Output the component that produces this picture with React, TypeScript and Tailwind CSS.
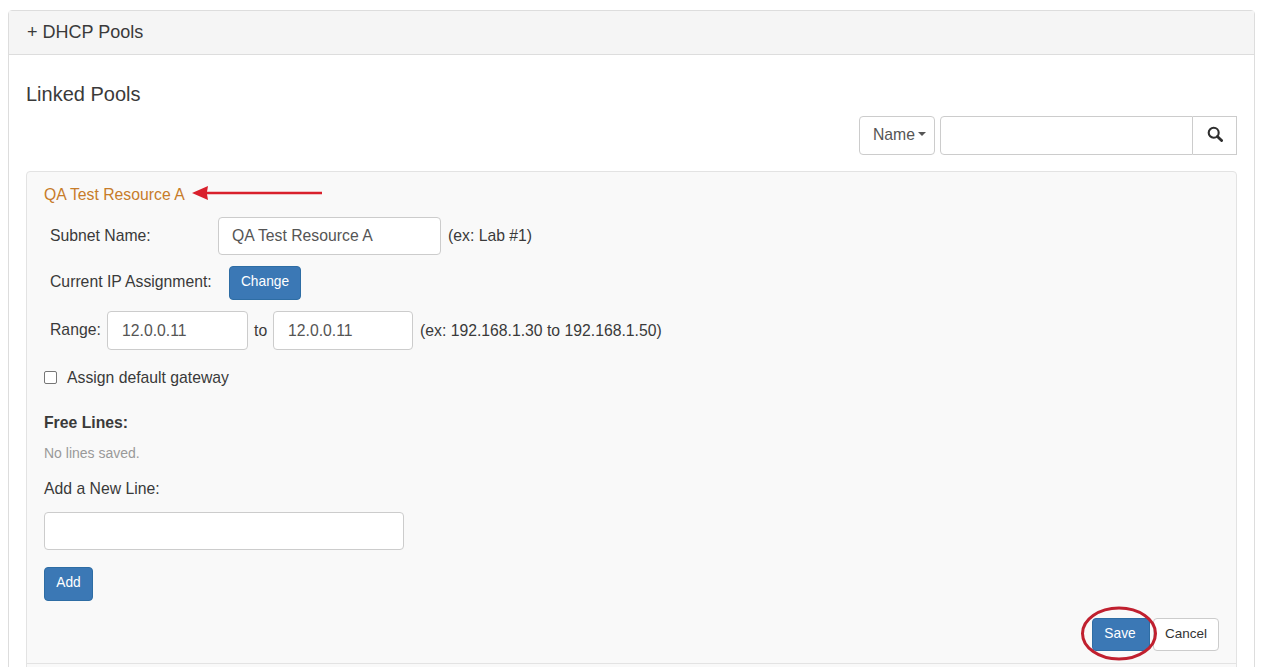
const inputClass =
  'h-[38px] rounded-[4px] border border-[#ccc] bg-white px-[14px] text-[15.75px] text-[#555] outline-none'

const blueButton =
  'rounded-[4px] border border-[#2e6da4] bg-[#3b78b5] text-[13.75px] text-white'

export default function App() {
  return (
    <div className="relative h-[667px] w-[1262px] overflow-hidden bg-white font-['Liberation_Sans',Arial,sans-serif] text-[15.75px] text-[#3a3a3a]">
      <div className="ml-2 mt-[10px] h-[700px] w-[1247px] rounded-[4px] border border-[#ddd]">
        {/* Panel header */}
        <div className="flex h-[44px] items-center border-b border-[#ddd] bg-[#f5f5f5] pl-[18px] text-[18px]">
          + DHCP Pools
        </div>

        {/* Panel body */}
        <div className="px-[17px]">
          <h3 className="mt-[25px] text-[20px] leading-[28px]">Linked Pools</h3>

          {/* Search */}
          <div className="mt-[8px] flex justify-end">
            <button className="flex h-[39px] w-[76px] items-center justify-center rounded-[4px] border border-[#ccc] bg-white pb-[2px] pl-[5px] text-[#555]">
              Name
              <span className="ml-[3px] mt-[-2px] h-0 w-0 border-x-[4px] border-t-[4px] border-x-transparent border-t-[#555]" />
            </button>
            <input className="ml-[5px] h-[39px] w-[253px] rounded-l-[4px] border border-[#ccc] bg-white outline-none" />
            <button className="flex h-[39px] w-[44px] items-center justify-center border border-l-0 border-[#ccc] bg-white">
              <svg className="mt-[-4px]" width="16" height="16" viewBox="0 0 16 16" fill="none">
                <circle cx="6.7" cy="6.7" r="5" stroke="#2f2f2f" strokeWidth="2.1" />
                <path d="M10.4 10.4 L14.6 14.6" stroke="#2f2f2f" strokeWidth="2.8" strokeLinecap="round" />
              </svg>
            </button>
          </div>

          {/* Resource card */}
          <div className="mt-[16px] h-[530px] w-[1211px] rounded-t-[4px] border border-[#e3e3e3] bg-[#f9f9f9] pl-[17px] pr-[17px]">
            <div className="mt-[13px] leading-[20px] text-[#c77c2a]">QA Test Resource A</div>

            <div className="mt-[12px] flex items-center pl-[6px]">
              <span className="w-[168px]">Subnet Name:</span>
              <input className={`${inputClass} w-[223px] pl-[13px]`} defaultValue="QA Test Resource A" readOnly />
              <span className="ml-[7px]">(ex: Lab #1)</span>
            </div>

            <div className="mt-[11px] flex items-center pl-[6px]">
              <span className="mt-[-2px] w-[179px]">Current IP Assignment:</span>
              <button className={`${blueButton} h-[34px] w-[72px] pb-[2px]`}>Change</button>
            </div>

            <div className="mt-[11px] flex items-center pl-[6px]">
              <span className="mt-[-2px] w-[57px]">Range:</span>
              <input className={`${inputClass} h-[39px] w-[141px]`} defaultValue="12.0.0.11" readOnly />
              <span className="ml-[6px] w-[19px]">to</span>
              <input className={`${inputClass} h-[39px] w-[140px]`} defaultValue="12.0.0.11" readOnly />
              <span className="ml-[7px]">(ex: 192.168.1.30 to 192.168.1.50)</span>
            </div>

            <label className="mt-[16px] flex items-center">
              <span className="h-[13px] w-[13px] rounded-[2px] border border-[#767676] bg-white" />
              <span className="ml-[10px]">Assign default gateway</span>
            </label>

            <div className="mt-[23px] font-bold leading-[20px]">Free Lines:</div>
            <div className="mt-[10px] text-[14px] leading-[20px] text-[#999]">No lines saved.</div>
            <div className="mt-[16px] leading-[20px]">Add a New Line:</div>
            <input className={`${inputClass} mt-[13px] block w-[360px]`} />
            <button className={`${blueButton} mt-[17px] block h-[34px] w-[49px]`}>Add</button>

            <div className="mt-[17px] flex justify-end">
              <button className={`${blueButton} h-[33px] w-[58px] pr-[2px]`}>Save</button>
              <button className="ml-[3px] h-[33px] w-[66px] rounded-[4px] border border-[#ccc] bg-white text-[13.5px] text-[#333]">
                Cancel
              </button>
            </div>

            <div className="mx-[-17px] mt-[12px] border-t border-[#e3e3e3]" />
          </div>
        </div>
      </div>

      {/* Red annotations */}
      <svg className="absolute left-[190px] top-[184px]" width="134" height="18" viewBox="0 0 134 18">
        <path d="M2 9 L18 2 L17 7.8 L132 7.8 L132 10.2 L17 10.2 L18 16 Z" fill="#d9202c" />
      </svg>
      <svg className="absolute left-[1080px] top-[604px]" width="78" height="58" viewBox="0 0 78 58">
        <ellipse cx="39" cy="29.5" rx="36.5" ry="25.5" fill="none" stroke="#c0202f" strokeWidth="3" />
      </svg>
    </div>
  )
}
